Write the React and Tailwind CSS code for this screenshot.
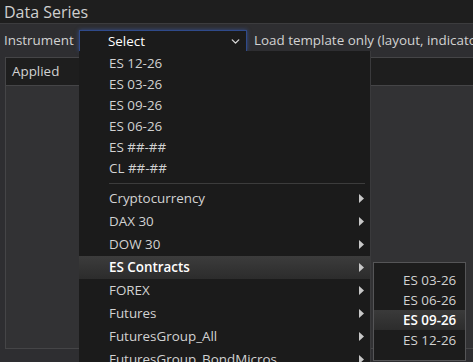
import { ChevronDown } from 'lucide-react';

const font = { fontFamily: '"Open Sans", "Noto Sans", sans-serif' };

const contracts = ['ES 12-26', 'ES 03-26', 'ES 09-26', 'ES 06-26', 'ES ##-##', 'CL ##-##'];
const groups = ['Cryptocurrency', 'DAX 30', 'DOW 30', 'ES Contracts', 'FOREX', 'Futures', 'FuturesGroup_All', 'FuturesGroup_BondMicros'];
const subItems = ['ES 03-26', 'ES 06-26', 'ES 09-26', 'ES 12-26'];

function Arrow() {
  return (
    <svg width="5" height="9" viewBox="0 0 5 9" className="shrink-0">
      <path d="M0 0 L5 4.5 L0 9 Z" fill="#c8c8c8" />
    </svg>
  );
}

export default function App() {
  return (
    <div className="relative w-[473px] h-[362px] overflow-hidden bg-[#2e2e31] text-[#d2d2d2] flex flex-col" style={font}>
      <div className="h-[24px] shrink-0 bg-[#1e1e1e] border-b border-[#3c3c3e] px-[4px] flex items-center text-[16px] text-[#cfcfcf]">
        Data Series
      </div>

      <div className="h-[33px] shrink-0 flex items-center text-[13.4px] whitespace-nowrap">
        <span className="pl-[4px] w-[79px] shrink-0">Instrument</span>
        <span className="w-[175px] shrink-0" />
        <span className="shrink-0">Load template only (layout, indicators)</span>
      </div>

      <div className="mx-[5px] mb-[13px] flex-1 flex flex-col border border-[#454547] -mr-[10px]">
        <div className="h-[28px] shrink-0 bg-[#1e1e1e] border-b border-[#454547] pl-[6px] flex items-center text-[13.4px]">
          Applied
        </div>
        <div className="flex-1 bg-[#323234]" />
      </div>

      {/* instrument select, opened */}
      <div className="absolute left-[79px] top-[30px] w-[292px] bottom-0 text-[13.4px]">
        <div className="h-[21px] w-[168px] bg-[#1b1b1b] border-t border-l border-r border-[#2f4a8a] shadow-[0_0_4px_rgba(60,100,200,0.6)] flex items-center pl-[28px] pr-[4px] text-white">
          <span className="flex-1 font-medium">Select</span>
          <ChevronDown size={13} strokeWidth={2.5} className="text-[#d8d8d8]" />
        </div>
        <div className="absolute left-0 right-0 top-[21px] bottom-0 bg-[#1b1b1b] border-r border-[#3a3a3c]">
          <div className="pt-[2px]">
            {contracts.map((c) => (
              <div key={c} className="h-[21px] pl-[30px] flex items-center">{c}</div>
            ))}
          </div>
          <div className="ml-[30px] mr-[5px] mt-[4px] mb-[3px] border-t border-[#3c3c3c]" />
          {groups.map((g) => (
            <div
              key={g}
              className={`h-[23px] pl-[30px] pr-[6px] flex items-center ${g === 'ES Contracts' ? 'bg-gradient-to-b from-[#3c3c3c] to-[#2c2c2c] text-white font-semibold' : ''}`}
            >
              <span className="flex-1">{g}</span>
              <Arrow />
            </div>
          ))}
        </div>
      </div>

      {/* submenu */}
      <div className="absolute left-[373px] top-[262px] w-[93px] h-[99px] bg-[#1c1c1c] border border-[#555557] text-[13.4px] pt-[7px]">
        {subItems.map((s) => (
          <div
            key={s}
            className={`h-[20px] pl-[29px] flex items-center ${s === 'ES 09-26' ? 'bg-gradient-to-b from-[#3a3a3a] to-[#2c2c2c] text-white font-semibold' : ''}`}
          >
            {s}
          </div>
        ))}
      </div>
    </div>
  );
}
